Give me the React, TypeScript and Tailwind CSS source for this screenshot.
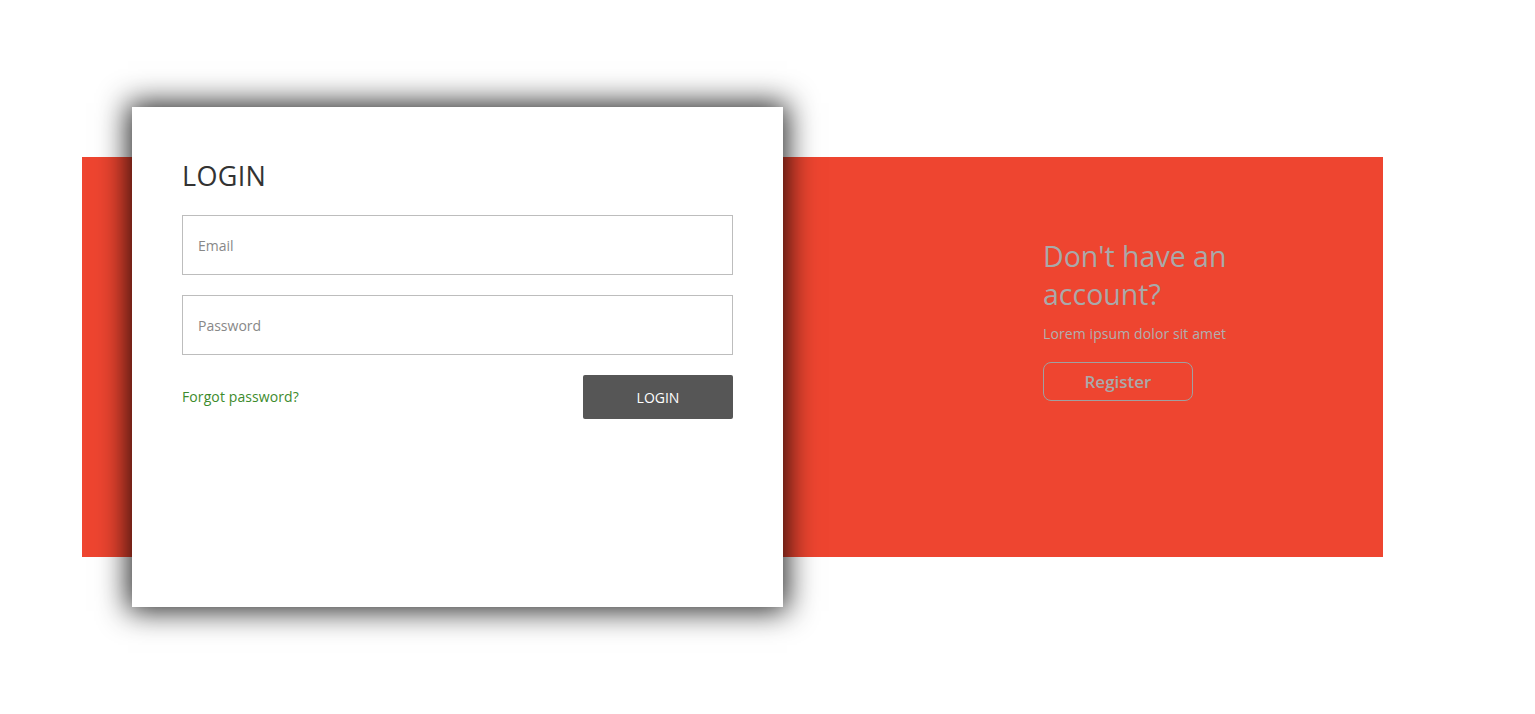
import React from "react";

export default function App() {
  return (
    <div className="min-h-[714px] w-full bg-white" style={{ fontFamily: '"Open Sans", "Noto Sans", sans-serif' }}>
      <div className="pt-[157px] pl-[82px]">
        <div className="flex h-[400px] w-[1301px] items-center bg-[#ee4530] pl-[50px]">
          <div className="flex h-[500px] w-[651px] shrink-0 flex-col bg-white px-[50px] pt-[52px] shadow-[0_0_28px_4px_rgba(0,0,0,0.85)]">
            <h1 className="text-[27px] leading-[34px] tracking-[0.3px] text-[#333]">LOGIN</h1>
            <div className="mt-[22px] flex h-[60px] items-center border border-[#bdbdbd] pl-[15px] text-[14px] text-[#888]">
              Email
            </div>
            <div className="mt-[20px] flex h-[60px] items-center border border-[#bdbdbd] pl-[15px] text-[14px] text-[#888]">
              Password
            </div>
            <div className="mt-[20px] flex items-center justify-between">
              <span className="-mt-[1px] text-[14px] tracking-[0.1px] text-[#3d8b2c]">Forgot password?</span>
              <button className="flex h-[44px] w-[150px] items-center justify-center rounded-[2px] bg-[#565656] text-[14px] text-white">
                LOGIN
              </button>
            </div>
          </div>
          <div className="flex h-full flex-1 flex-col pl-[260px] pt-[80px]">
            <h2 className="w-[220px] text-[28.5px] leading-[38px] text-[#a9a9a9]">Don't have an account?</h2>
            <p className="mt-[11px] text-[14px] leading-[20px] tracking-[0.1px] text-[#b0b0b0]">Lorem ipsum dolor sit amet</p>
            <button className="mt-[18px] flex h-[39px] w-[150px] items-center justify-center rounded-[8px] border border-[#a0a0a0] text-[17px] font-semibold text-[#a9a9a9]">
              Register
            </button>
          </div>
        </div>
      </div>
    </div>
  );
}
